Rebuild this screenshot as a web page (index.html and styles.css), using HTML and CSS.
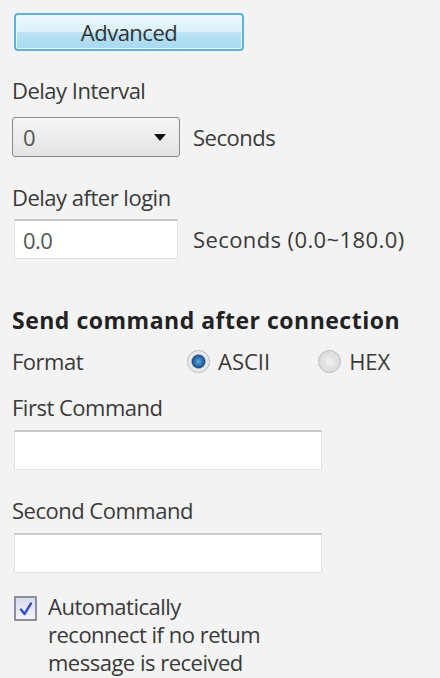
FILE: index.html
```html
<!DOCTYPE html>
<html>
<head>
<meta charset="utf-8">
<link rel="stylesheet" href="styles.css">
</head>
<body>
<div class="panel">
  <div class="btn">Advanced</div>
  <div class="label l-interval">Delay Interval</div>
  <div class="row r-combo">
    <div class="combo"><span class="val">0</span><span class="arrow"></span></div>
    <span class="unit">Seconds</span>
  </div>
  <div class="label l-login">Delay after login</div>
  <div class="row r-input">
    <div class="input short"><span class="val">0.0</span></div>
    <span class="unit wide">Seconds (0.0~180.0)</span>
  </div>
  <div class="heading">Send command after connection</div>
  <div class="row r-format">
    <span class="fmt">Format</span>
    <span class="radio on"></span><span class="rlabel">ASCII</span>
    <span class="radio off"></span><span class="rlabel">HEX</span>
  </div>
  <div class="label l-first">First Command</div>
  <div class="input long"></div>
  <div class="label l-second">Second Command</div>
  <div class="input long"></div>
  <div class="check-row">
    <span class="check"><svg width="16" height="16" viewBox="0 0 16 16"><path d="M3 8.5 L6.5 13 L13 2.5" fill="none" stroke="#3b4fc4" stroke-width="2.4" stroke-linecap="round" stroke-linejoin="round"/></svg></span>
    <span class="ctext">Automatically<br>reconnect if no retum<br>message is received</span>
  </div>
</div>
</body>
</html>
```
FILE: styles.css
```css
html, body {
  margin: 0;
  padding: 0;
  background: #f3f3f3;
}
body {
  font-family: "Open Sans", "Noto Sans", sans-serif;
  font-size: 22px;
  color: #3a3a3a;
  letter-spacing: -0.5px;
}
.panel {
  padding: 13px 12px 0 12px;
  width: 416px;
  height: 665px;
  overflow: hidden;
}
.btn {
  margin-left: 2px;
  width: 226px;
  height: 34px;
  border: 2px solid #5cb3d6;
  border-radius: 4px;
  background: linear-gradient(#eef8fd 0%, #d9f0fa 50%, #b9e2f4 52%, #a7d9f0 100%);
  box-shadow: inset 0 0 0 1px #e8f7fd;
  display: flex;
  align-items: center;
  justify-content: center;
  color: #333;
}
.label {
  line-height: 24px;
}
.l-interval { margin-top: 27px; }
.l-login { margin-top: 28px; }
.l-first { margin-top: 22px; }
.l-second { margin-top: 28px; }
.row {
  display: flex;
  align-items: center;
}
.r-combo { margin-top: 15px; }
.r-input { margin-top: 10px; }
.combo {
  border: 1px solid #8a8a8a;
  border-radius: 3px;
  background: linear-gradient(#f6f6f6, #e3e3e3);
  display: flex;
  align-items: center;
  justify-content: space-between;
  padding: 0 13px 0 10px;
  box-sizing: border-box;
  width: 168px;
  height: 40px;
}
.combo .val {
  color: #555;
}
.arrow {
  width: 0;
  height: 0;
  border-left: 6px solid transparent;
  border-right: 6px solid transparent;
  border-top: 7px solid #111;
}
.unit {
  margin-left: 13px;
}
.unit.wide {
  margin-left: 15px;
  letter-spacing: 0.4px;
}
.input {
  background: #fff;
  border: 1px solid #e2e2e2;
  border-top: 2px solid #c9c9c9;
  box-sizing: border-box;
  height: 40px;
  display: flex;
  align-items: center;
}
.input.short {
  margin-left: 2px;
  width: 164px;
  padding-left: 8px;
  color: #555;
}
.input.long {
  margin-left: 2px;
  width: 308px;
  margin-top: 11px;
}
.heading {
  margin-top: 49px;
  line-height: 24px;
  font-size: 23px;
  font-weight: bold;
  color: #222;
  letter-spacing: 0.5px;
}
.r-format {
  margin-top: 17px;
  height: 24px;
}
.fmt {
  width: 175px;
}
.radio {
  width: 23px;
  height: 23px;
  border-radius: 50%;
  box-sizing: border-box;
  border: 1px solid #b8b8b8;
  margin-right: 8px;
}
.radio.on {
  background: radial-gradient(circle, #6aa8d8 0%, #2a6fae 30%, #1c4f86 42%, #e4e4e4 50%, #f8f8f8 100%);
}
.radio.off {
  margin-left: 48px;
  background: radial-gradient(circle, #f2f2f2 0%, #dcdcdc 60%, #f6f6f6 100%);
}
.rlabel {
  line-height: 24px;
  letter-spacing: 0;
}
.check-row {
  margin-top: 19px;
  display: flex;
  align-items: flex-start;
}
.check {
  margin: 4px 0 0 2px;
  width: 23px;
  height: 25px;
  box-sizing: border-box;
  border: 2px solid #8f8f9a;
  background: linear-gradient(#d8dcf0, #f2f3fa);
  display: flex;
  align-items: center;
  justify-content: center;
}
.ctext {
  margin-left: 11px;
  line-height: 28px;
}
```
